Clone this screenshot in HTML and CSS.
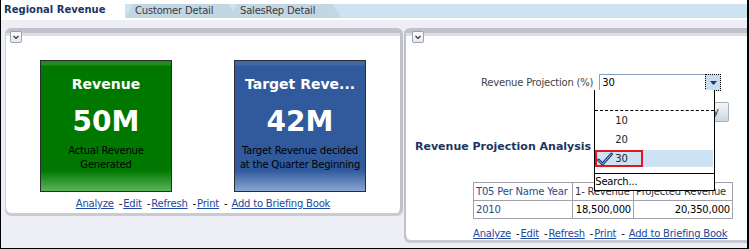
FILE: index.html
```html
<!DOCTYPE html>
<html>
<head>
<meta charset="utf-8">
<link rel="stylesheet" href="styles.css">
</head>
<body>
<div class="frame">
  <div class="tabbar">
    <div class="tab-active">Regional Revenue</div>
    <div class="strip">
      <div class="tab t1">Customer Detail</div>
      <div class="tab t2">SalesRep Detail</div>
    </div>
  </div>
  <div class="panels">
    <section class="panel panel-left">
      <div class="phead"></div>
      <div class="collapse"><svg width="10" height="10" viewBox="0 0 10 10"><polyline points="2.5,4 5,6.5 7.5,4" fill="none" stroke="#333" stroke-width="1.2"/></svg></div>
      <div class="tiles">
        <div class="tile green">
          <div class="tt">Revenue</div>
          <div class="tv">50M</div>
          <div class="td">Actual Revenue<br>Generated</div>
        </div>
        <div class="tile blue">
          <div class="tt">Target Reve...</div>
          <div class="tv">42M</div>
          <div class="td">Target Revenue decided<br>at the Quarter Beginning</div>
        </div>
      </div>
      <div class="links">
        <a href="#">Analyze</a><span class="sep">-</span><a href="#">Edit</a><span class="sep">-</span><a href="#">Refresh</a><span class="sep">-</span><a href="#">Print</a><span class="sep last">-</span><a href="#">Add to Briefing Book</a>
      </div>
    </section>
    <section class="panel panel-right">
      <div class="phead"></div>
      <div class="collapse collapse-r"><svg width="10" height="10" viewBox="0 0 10 10"><polyline points="2.5,4 5,6.5 7.5,4" fill="none" stroke="#333" stroke-width="1.2"/></svg></div>
      <div class="prompt">
        <span class="plabel">Revenue Projection (%)</span>
        <div class="select">
          <span class="sval">30</span>
          <span class="sbtn"><svg width="9" height="6" viewBox="0 0 9 6"><polygon points="1,1 8,1 4.5,5" fill="#1d3a6b"/></svg></span>
          <div class="dropdown">
            <div class="opt blank"></div>
            <div class="opt">10</div>
            <div class="opt">20</div>
            <div class="opt sel"><span class="selbox"><svg width="16" height="14" viewBox="0 0 16 14"><path d="M1.5 8 L5.5 12 L14.5 2" fill="none" stroke="#1f3f7a" stroke-width="3" stroke-linejoin="round" stroke-linecap="round"/><path d="M1.5 8 L5.5 12 L14.5 2" fill="none" stroke="#9fbbe6" stroke-width="1" stroke-linejoin="round" stroke-linecap="round"/></svg>30</span></div>
            <div class="search">Search...</div>
          </div>
        </div>
      </div>
      <div class="applyrow"><span class="applybtn">Apply</span></div>
      <h2 class="title">Revenue Projection Analysis</h2>
      <table class="grid">
        <tr>
          <th class="c1 blue-t">T05 Per Name Year</th>
          <th class="c2">1- Revenue</th>
          <th class="c3">Projected Revenue</th>
        </tr>
        <tr>
          <td class="c1 blue-t">2010</td>
          <td class="c2 num">18,500,000</td>
          <td class="c3 num">20,350,000</td>
        </tr>
      </table>
      <div class="links links-r">
        <a href="#">Analyze</a><span class="sep">-</span><a href="#">Edit</a><span class="sep">-</span><a href="#">Refresh</a><span class="sep">-</span><a href="#">Print</a><span class="sep last">-</span><a href="#">Add to Briefing Book</a>
      </div>
    </section>
  </div>
</div>
</body>
</html>
```
FILE: styles.css
```css
html, body { margin: 0; padding: 0; background: #fff; }
.frame {
  width: 749px; height: 249px; box-sizing: border-box;
  border-left: 1px solid #000; border-right: 2px solid #000; border-bottom: 1px solid #000;
  background: #eeeef6; overflow: hidden;
  font-family: "DejaVu Sans", sans-serif; font-size: 10px; letter-spacing: -0.2px; color: #000;
}
.tabbar { display: flex; height: 20px; background: #fff; }
.tab-active {
  width: 124px; padding-left: 3px; box-sizing: border-box;
  font-weight: bold; color: #1b365f; line-height: 20px; letter-spacing: 0;
}
.strip { flex: 1; display: flex; height: 14px; margin-top: 4px; background: #cde3f2; }
.tab {
  width: 112px; box-sizing: border-box; height: 14px; line-height: 14px;
  background: #c3d6e4; color: #3c3c3c;
  clip-path: polygon(0 100%, 8px 0, calc(100% - 8px) 0, 100% 100%);
}
.t1 { padding-left: 10px; }
.t2 { margin-left: -8px; padding-left: 11px; }

.panels { display: flex; align-items: flex-start; gap: 1px; margin-top: 8px; padding-left: 4px; }
.panel {
  position: relative; flex: none; background: #fff; box-sizing: border-box;
  border-top: 5px solid #c1c1c9; border-radius: 6px;
  box-shadow: 0 3px 0 #cacad2;
}
.panel-left { width: 398px; height: 185px; border-left: 1px solid #cfcfd6; border-right: 3px solid #c1c1c9; }
.panel-right { width: 400px; height: 212px; border-left: 2px solid #c1c1c9; }
.phead { height: 3px; background: #dedee5; }
.collapse {
  width: 12px; height: 12px; box-sizing: border-box; margin: -5px 0 0 4px;
  border: 1px solid #9aa4b4; border-radius: 2px; background: linear-gradient(#ffffff, #e4e8ef);
  display: flex; align-items: center; justify-content: center;
}
.collapse-r { margin-left: 6px; }

.tiles { display: flex; justify-content: center; gap: 62px; margin-top: 17px; }
.tile {
  width: 132px; height: 132px; box-sizing: border-box; border: 1px solid #2c2c2c;
  color: #fff; text-align: center; padding-top: 15px;
}
.green { background: linear-gradient(#218b21 0, #218b21 4px, #007800 5px, #007800 84%, #5cb45c 100%); }
.blue { background: linear-gradient(#4069a8 0, #4069a8 4px, #305a9c 5px, #305a9c 84%, #8aa5d2 100%); }
.tt { font-weight: bold; font-size: 14px; line-height: 17px; letter-spacing: 0; }
.tv { font-weight: bold; font-size: 28px; line-height: 34px; margin-top: 12px; letter-spacing: 0; }
.td { color: #000; line-height: 14px; margin-top: 5px; }

.links { display: flex; justify-content: center; margin-top: 5px; line-height: 13px; }
.links a { color: #2048a0; text-decoration: underline; }
.sep { margin: 0 1px 0 5px; color: #000; }
.sep.last { margin-right: 4px; }
.links-r { justify-content: flex-start; padding-left: 67px; margin-top: 8px; }

.prompt { display: flex; align-items: center; margin-top: 31px; padding-left: 75px; }
.plabel { color: #444; line-height: 17px; margin-right: 6px; }
.select {
  position: relative; width: 122px; height: 17px; box-sizing: border-box;
  border: 1px solid #8aa0bd; display: flex; align-items: center; justify-content: space-between;
  z-index: 2;
}
.sval { padding-left: 2px; line-height: 15px; }
.sbtn {
  width: 16px; height: 17px; box-sizing: border-box; margin-right: -1px;
  border: 1px dotted #000; background: #c9dcf0; display: flex; align-items: center; justify-content: center;
}
.dropdown {
  position: absolute; top: 100%; left: -6px; width: 121px; box-sizing: border-box;
  background: #fff; border: 1px solid #000; border-top: none;
}
.opt { height: 19px; line-height: 19px; padding-left: 20px; color: #222; }
.opt.blank { height: 20px; border-bottom: 1px dashed #000; }
.opt.sel { padding-left: 0; margin: 1px 1px 1px 0; height: 17px; background: #cde3f3; display: flex; }
.selbox {
  display: flex; align-items: center; gap: 2px; width: 48px; height: 17px; box-sizing: border-box;
  border: 2px solid #e0191e; padding-left: 0; line-height: 13px;
}
.search { margin-top: 6px; border-top: 1px solid #000; line-height: 15px; height: 16px; }

.applyrow { margin-top: 11px; padding-left: 275px; height: 20px; }
.applybtn {
  display: block; width: 48px; height: 20px; box-sizing: border-box;
  border: 1px solid #a8aeb8; border-radius: 2px; background: linear-gradient(#f6f6f8, #dde4ec 60%, #c8d8e2);
  color: #333; text-align: center; line-height: 18px;
}
.title {
  margin: 18px 0 0 9px; font-size: 11px; line-height: 14px; font-weight: bold; color: #1d3560; letter-spacing: 0;
}
.grid { margin: 28px 0 0 67px; border-collapse: collapse; }
.grid th, .grid td {
  border: 1px solid #a0a0a8; height: 17px; padding: 0 2px; font-weight: normal;
  text-align: left; line-height: 16px; white-space: nowrap; color: #333;
}
.grid .c1 { width: 94px; }
.grid .c2 { width: 56px; }
.grid .c3 { width: 94px; }
.grid .blue-t { color: #2b4a8c; }
.grid .num { text-align: right; color: #000; }
```
